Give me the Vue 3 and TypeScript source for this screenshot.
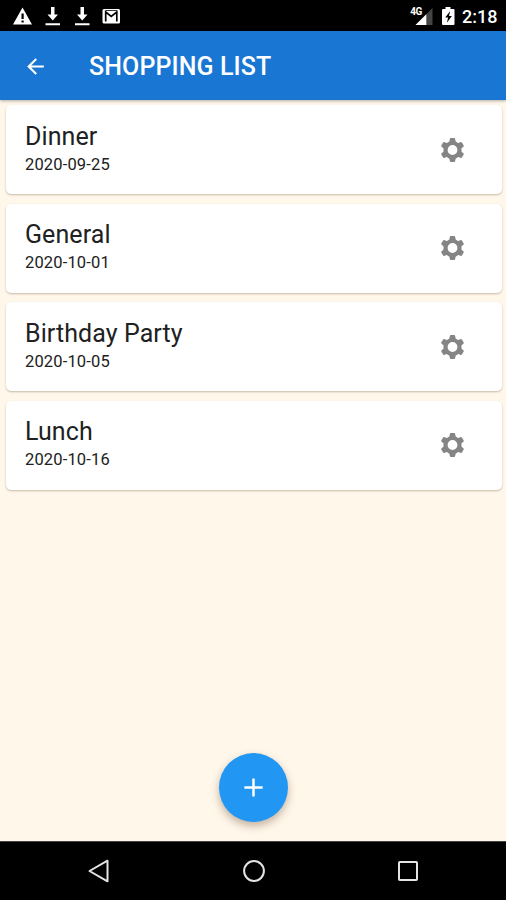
<script setup lang="ts">
interface ShoppingList {
  name: string
  date: string
}

const lists: ShoppingList[] = [
  { name: 'Dinner', date: '2020-09-25' },
  { name: 'General', date: '2020-10-01' },
  { name: 'Birthday Party', date: '2020-10-05' },
  { name: 'Lunch', date: '2020-10-16' },
]
</script>

<template>
  <div class="screen">
    <div class="status">
      <svg class="notices" viewBox="0 0 130 31" fill="#fff">
        <path fill-rule="evenodd" d="M22.500 7.500L32 24.500H13ZM21.500 13.500V19H23.700V13.500ZM21.500 20.500V22.600H23.700V20.500Z" />
        <path d="M51 7H54.500V14.500H58L52.750 20.500L47.500 14.500H51ZM45.500 23.300H60V25.300H45.500Z" />
        <path d="M80.500 7H84V14.500H87.500L82.250 20.500L77 14.500H80.500ZM75 23.300H89.500V25.300H75Z" />
        <rect x="102.500" y="9" width="17.500" height="14.500" rx="1.500" />
        <path d="M105.700 21.500V12L111.250 16.500L116.800 12V21.500" fill="none" stroke="#000" stroke-width="1.700" />
        <path d="M105.500 10.500H117" stroke="#000" stroke-width=".8" />
      </svg>
      <div class="system">
        <span class="network">4G</span>
        <svg class="indicators" viewBox="0 0 48 31">
          <path d="M19.500 8V25H2.500Z" fill="#444" />
          <path d="M13.300 14.200V25H2.500Z" fill="#fff" />
          <path d="M32.500 7H37.500V9H40.500Q41.500 9 41.500 10V24Q41.500 25 40.500 25H30Q29 25 29 24V10Q29 9 30 9H32.500Z" fill="#fff" />
          <path d="M37.200 11L32.200 17.500H35.100L33.900 22.800L38.900 16H36Z" fill="#000" />
        </svg>
        <span class="clock">2:18</span>
      </div>
    </div>

    <header class="toolbar">
      <button class="back" aria-label="Back">
        <svg viewBox="0 0 24 24" fill="#fff"><path d="M20 11H7.830L13.420 5.410L12 4L4 12L12 20L13.410 18.590L7.830 13H20Z" /></svg>
      </button>
      <h1>SHOPPING LIST</h1>
    </header>

    <main>
      <ul class="lists">
        <li v-for="list in lists" :key="list.name" class="card">
          <div class="info">
            <h2>{{ list.name }}</h2>
            <time>{{ list.date }}</time>
          </div>
          <button class="gear" aria-label="Settings">
            <svg viewBox="0 0 24 24" fill="#858585">
              <circle cx="12" cy="12" r="7" fill="none" stroke="#858585" stroke-width="4.200" />
              <path
                v-for="angle in [0, 60, 120, 180, 240, 300]"
                :key="angle"
                d="M8.500 5L9.400 .7Q9.600 .1 10.200 .1H13.800Q14.400 .1 14.600 .7L15.500 5Q12 3.800 8.500 5Z"
                :transform="`rotate(${angle} 12 12)`"
              />
            </svg>
          </button>
        </li>
      </ul>
      <button class="add" aria-label="Add list">
        <svg viewBox="0 0 24 24" stroke="#fff" stroke-width="2.600"><path d="M12 2.500V21.500M2.500 12H21.500" /></svg>
      </button>
    </main>

    <nav class="navigation">
      <svg viewBox="0 0 26 26"><path d="M3.500 13L21.500 2.700V23.300Z" /></svg>
      <svg viewBox="0 0 26 26"><circle cx="13" cy="13" r="9.900" /></svg>
      <svg viewBox="0 0 26 26"><rect x="4" y="4" width="18" height="18" rx=".8" /></svg>
    </nav>
  </div>
</template>

<style>
body { margin: 0; }
</style>

<style scoped>
.screen {
  width: 506px;
  height: 900px;
  display: flex;
  flex-direction: column;
  overflow: hidden;
  background: #fff7ea;
  font-family: Roboto, sans-serif;
}
button { padding: 0; border: 0; background: none; }
svg { display: block; }
h1, h2 { margin: 0; }
.status {
  height: 31px;
  flex: none;
  display: flex;
  justify-content: space-between;
  background: #000;
  color: #fff;
}
.notices { width: 130px; height: 31px; }
.system { display: flex; align-items: flex-start; }
.network { font-size: 10px; font-weight: 700; line-height: 12px; margin: 6px -9px 0 0; position: relative; letter-spacing: -.4px; }
.indicators { width: 48px; height: 31px; }
.clock { width: 44px; font-size: 18px; font-weight: 500; line-height: 33px; margin-left: 1px; white-space: nowrap; }
.toolbar {
  height: 69px;
  flex: none;
  display: flex;
  align-items: center;
  background: #1976d2;
  color: #fff;
  box-shadow: 0 1px 3px rgba(0, 0, 0, .3);
}
.back { margin-left: 23px; width: 25px; height: 25px; margin-top: 2px; }
.back svg { width: 25px; height: 25px; }
h1 { margin-left: 41px; padding-top: 2px; font-size: 25px; font-weight: 500; line-height: 32px; letter-spacing: .1px; }
main { flex: 1; display: flex; flex-direction: column; align-items: center; justify-content: space-between; padding: 5px 4px 19px 6px; }
.lists { list-style: none; margin: 0; padding: 0; align-self: stretch; display: flex; flex-direction: column; gap: 9.500px; }
.card {
  height: 89px;
  display: flex;
  align-items: center;
  justify-content: space-between;
  background: #fff;
  border-radius: 5px;
  box-shadow: 0 1px 2px rgba(70, 45, 20, .3);
  color: #212121;
}
.info { padding-left: 19px; height: 58px; }
h2 { font-size: 25px; font-weight: 400; line-height: 31px; letter-spacing: .08px; }
time { display: block; font-size: 16.500px; line-height: 25px; letter-spacing: .15px; }
.gear { margin-right: 37px; }
.gear svg { width: 25px; height: 24px; }
.add {
  width: 69px;
  height: 69px;
  border-radius: 50%;
  background: #2196f3;
  display: grid;
  place-items: center;
  margin-right: 1px;
  box-shadow: 0 4px 8px rgba(80, 45, 20, .35);
}
.add svg { width: 23px; height: 23px; }
.navigation {
  height: 59px;
  flex: none;
  box-sizing: border-box;
  border-top: 1px solid #444;
  display: flex;
  align-items: center;
  justify-content: space-between;
  padding: 0 85px 0 86px;
  background: #000;
}
.navigation svg { width: 26px; height: 26px; fill: none; stroke: #e4e4e4; stroke-width: 2; stroke-linejoin: round; }
</style>
